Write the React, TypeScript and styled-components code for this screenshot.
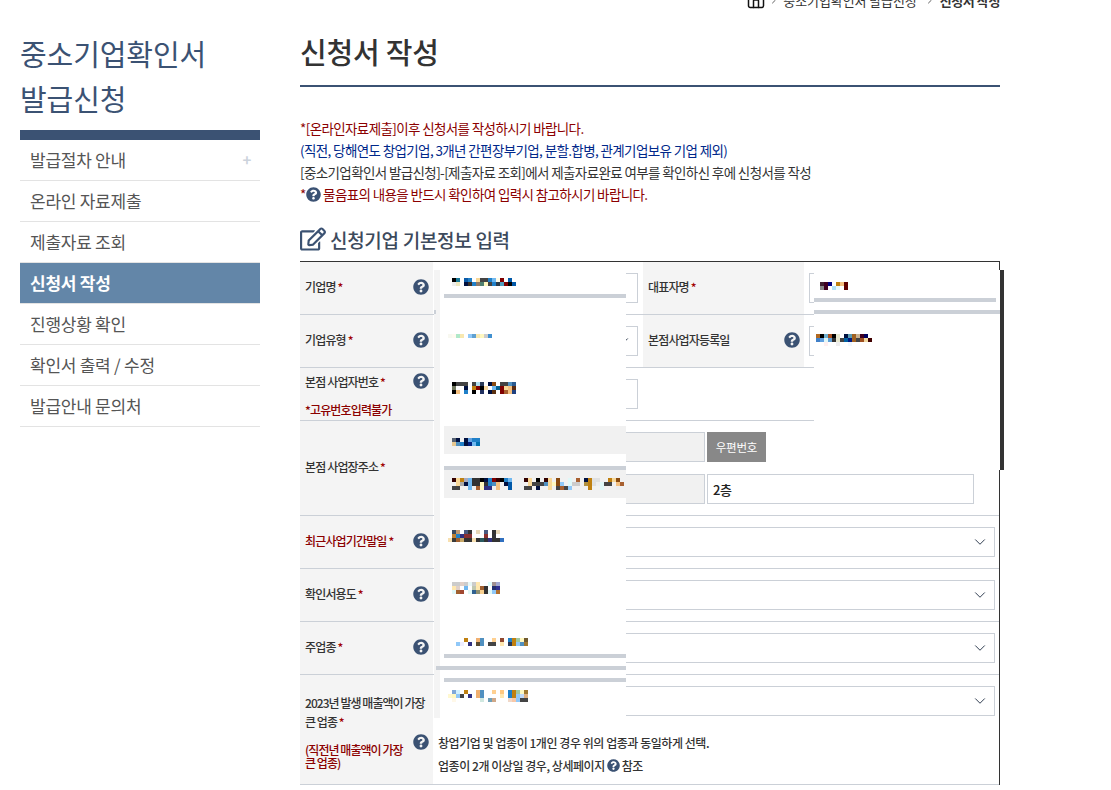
import React from "react";
import styled, { createGlobalStyle } from "styled-components";
import { ChevronDown, ChevronRight, House } from "lucide-react";
import { FaQuestionCircle, FaRegEdit } from "react-icons/fa";

const NAVY = "#3b5273";
const LINE = "#cbd0d7";
const DARK_RED = "#8b0000";

const GlobalStyle = createGlobalStyle`
  html, body {
    margin: 0;
    padding: 0;
    background: #fff;
    overflow: hidden;
    font-family: "Noto Sans CJK KR", "Noto Sans", sans-serif;
    color: #333;
  }
  * {
    box-sizing: border-box;
  }
`;

const Page = styled.div`
  display: flex;
  height: 790px;
  padding-left: 20px;
  overflow: hidden;
`;

const Sidebar = styled.aside`
  width: 240px;
  margin-right: 40px;
  padding-top: 31px;
  flex-shrink: 0;
`;

const SideTitle = styled.h1`
  margin: 0 0 9px;
  font-size: 29px;
  font-weight: 400;
  line-height: 45px;
  letter-spacing: -0.1px;
  color: ${NAVY};
`;

const SideMenu = styled.ul`
  margin: 0;
  padding: 0;
  list-style: none;
  border-top: 10px solid ${NAVY};
`;

const SideItem = styled.li<{ $active?: boolean }>`
  display: flex;
  align-items: center;
  justify-content: space-between;
  height: 41px;
  padding: 0 9px 2px 10px;
  border-bottom: 1px solid #e3e3e3;
  background-clip: padding-box;
  background-color: ${(p) => (p.$active ? "#6386a8" : "transparent")};
  color: ${(p) => (p.$active ? "#fff" : "#555")};
  font-size: 17px;
  font-weight: ${(p) => (p.$active ? 700 : 400)};
  letter-spacing: -0.25px;
`;

const PlusMark = styled.span`
  color: #ccd3dc;
  font-size: 15px;
  font-weight: 700;
`;

const Main = styled.main`
  width: 700px;
  flex-shrink: 0;
`;

const Breadcrumb = styled.nav`
  display: flex;
  align-items: center;
  justify-content: flex-end;
  height: 18px;
  margin-top: -9px;
  font-size: 13px;
  letter-spacing: -0.1px;
  color: #333;
`;

const HomeIcon = styled(House)`
  margin-right: 2px;
`;

const Crumb = styled.span<{ $current?: boolean }>`
  display: flex;
  align-items: center;
  margin-left: ${(p) => (p.$current ? "7px" : "3px")};
  font-weight: ${(p) => (p.$current ? 700 : 400)};
  letter-spacing: ${(p) => (p.$current ? "-0.4px" : "-0.1px")};
`;

const CrumbArrow = styled(ChevronRight)`
  margin-right: 4px;
`;

const PageTitle = styled.h2`
  margin: 20px 0 0;
  height: 58px;
  padding-top: 1px;
  border-bottom: 2px solid ${NAVY};
  font-size: 29px;
  font-weight: 500;
  line-height: 42px;
  letter-spacing: -0.2px;
  color: #333;
`;

const Notice = styled.div`
  margin-top: 30px;
  font-size: 13.5px;
  line-height: 22px;
  letter-spacing: -0.62px;
`;

const NoticeLine = styled.p<{ $color?: string }>`
  display: flex;
  align-items: center;
  margin: 0;
  height: 22px;
  color: ${(p) => p.$color || "#333"};
`;

const SectionTitle = styled.h3`
  display: flex;
  align-items: center;
  gap: 4px;
  margin: 19px 0 7px;
  height: 30px;
  font-size: 19px;
  font-weight: 500;
  letter-spacing: -0.3px;
  color: #3d4a5c;
`;

const FormTable = styled.div`
  position: relative;
  border-top: 1px solid #333;
  border-right: 1px solid #333;
`;

const Row = styled.div<{ $height: number }>`
  display: flex;
  height: ${(p) => p.$height}px;
  border-bottom: 1px solid ${LINE};
`;

const Th = styled.div<{ $width?: number; $pt?: number }>`
  position: relative;
  display: flex;
  align-items: ${(p) => (p.$pt ? "flex-start" : "center")};
  justify-content: space-between;
  width: ${(p) => p.$width || 133}px;
  flex-shrink: 0;
  padding: ${(p) => (p.$pt ? `${p.$pt}px 4px 0 5px` : "0 4px 2px 5px")};
  background: #f4f4f4;
  font-size: 12px;
  font-weight: 500;
  letter-spacing: -0.85px;
  color: ${(p) => p.color || "#333"};
`;

const ThText = styled.div`
  flex: 1;
  line-height: 18px;
`;

const WideLabel = styled.div`
  flex: 1;
  line-height: 19px;
  letter-spacing: -0.95px;
`;

const ThWarn = styled.div<{ $mt: number; $tight?: boolean }>`
  margin-top: ${(p) => p.$mt}px;
  color: ${DARK_RED};
  line-height: ${(p) => (p.$tight ? "13px" : "18px")};
`;

const Star = styled.span`
  color: #a00000;
`;

const HelpIcon = styled(FaQuestionCircle)`
  flex-shrink: 0;
  color: ${NAVY};
`;

const FloatingHelp = styled(HelpIcon)`
  position: absolute;
  right: 4px;
  top: 59px;
`;

const Td = styled.div<{ $width?: number }>`
  display: flex;
  flex-direction: column;
  ${(p) => (p.$width ? `width: ${p.$width}px;` : "flex: 1;")}
  padding: 11px 4px 0 5px;
  min-width: 0;
`;

const NarrowTd = styled(Td)`
  padding-right: 5px;
`;

const Field = styled.div<{ $width?: number; $gray?: boolean }>`
  display: flex;
  align-items: center;
  height: 30px;
  padding: 0 5px;
  ${(p) => (p.$width ? `width: ${p.$width}px;` : "")}
  border: 1px solid ${LINE};
  background: ${(p) => (p.$gray ? "#f1f1f1" : "#fff")};
  font-size: 13px;
  font-weight: 500;
  letter-spacing: -0.4px;
  color: #222;
`;

const SelectField = styled(Field)`
  justify-content: flex-end;
  padding-right: 5px;
  color: #333;
`;

const AddressRow = styled.div`
  display: flex;
  gap: 2px;
  margin-bottom: 12px;
`;

const ZipButton = styled.button`
  width: 59px;
  height: 30px;
  padding: 0;
  border: 0;
  background: #888;
  color: #fff;
  font-family: inherit;
  font-size: 11.5px;
  letter-spacing: -0.2px;
`;

const Guide = styled.div`
  padding-top: 15px;
  font-size: 12px;
  font-weight: 500;
  line-height: 23px;
  letter-spacing: -0.45px;
  color: #333;
`;

const GuideLine = styled.div`
  display: flex;
  align-items: center;
  gap: 2px;
`;

const LeftCover = styled.div`
  position: absolute;
  left: 134px;
  top: 8px;
  display: flex;
  flex-direction: column;
  width: 192px;
  height: 448px;
  padding-left: 6px;
  overflow: hidden;
  background: linear-gradient(to right, #f4f4f4 6px, #fff 6px);
`;

const RightCover = styled.div`
  position: absolute;
  left: 514px;
  top: 8px;
  display: flex;
  flex-direction: column;
  width: 190px;
  height: 200px;
  background: #fff;
  border-right: 4px solid #333;
`;

const CoverBar = styled.div<{ $mt: number; $ml?: number; $mr?: number }>`
  height: 4px;
  flex-shrink: 0;
  margin: ${(p) => p.$mt}px ${(p) => p.$mr || 0}px 0 ${(p) => p.$ml ?? 4}px;
  background: ${LINE};
`;

const CoverField = styled.div<{ $mt: number; $pt: number }>`
  height: 28px;
  flex-shrink: 0;
  margin: ${(p) => p.$mt}px 0 0 4px;
  padding-top: ${(p) => p.$pt}px;
  overflow: hidden;
  background: #f1f1f1;
`;

const CoverTick = styled.span`
  position: absolute;
  left: 0;
  top: 40px;
  width: 2px;
  height: 4px;
  background: ${LINE};
`;

const PixelSvg = styled.svg<{ $mt: number; $ml: number }>`
  display: block;
  flex-shrink: 0;
  margin: ${(p) => p.$mt}px 0 0 ${(p) => p.$ml}px;
`;

const PALETTE: Record<string, string> = {
  k: "#000",
  K: "#333",
  d: "#444",
  g: "#ccc",
  e: "#eee",
  t: "#1a7a9a",
  b: "#0a5aa8",
  B: "#2080c8",
  s: "#70b8f0",
  S: "#90c8f8",
  c: "#f8d898",
  y: "#fff8c0",
  m: "#800000",
  M: "#8a3030",
  n: "#001040",
  N: "#0058a8",
  o: "#c08010",
  O: "#f4c080",
  r: "#8a4a10",
  R: "#a86030",
  v: "#303080",
  w: "#e0f8f8",
  h: "#5090c0",
  x: "#e0e0e0",
};

type PixelsProps = { rows: string[]; mt?: number; ml?: number };

// each row is a list of colour tokens, "." leaves the block empty
const Pixels: React.FC<PixelsProps> = ({ rows, mt = 0, ml = 0 }) => {
  const cells = rows.map((row) => row.split(" "));
  const cols = Math.max(...cells.map((row) => row.length));
  return (
    <PixelSvg
      $mt={mt}
      $ml={ml}
      width={cols * 4}
      height={rows.length * 4}
      shapeRendering="crispEdges"
    >
      {cells.map((row, y) =>
        row.map((token, x) =>
          token === "." ? null : (
            <rect
              key={`${x}-${y}`}
              x={x * 4}
              y={y * 4}
              width={4}
              height={4}
              fill={PALETTE[token] || `#${token}`}
            />
          )
        )
      )}
    </PixelSvg>
  );
};

const BLUR_NAME = [
  "k t . b B . c d d B s fffbe8 m . N",
  "e efe8c0 . n 3a3028 B 8a7868 508070 y d B 2a3a48 50a0c0 m k N",
];
const BLUR_TYPE = ["f8f8f0 fffaf0 b0e8c8 f8e8b0 . S 60a0d0 f8e8b0 y g 4090d0"];
const BLUR_NUMBER = [
  "k d d d . d b0e0f0 2a3a58 . n r . d d h 2a5a90",
  "707860 . . n . o m k f8d8a0 . s 006090 m c O 5a2a10",
  "k O . B . k . 203060 . n 5a3010 . m R O 204080",
];
const BLUR_ZIP = ["556070 n . n 60a0e0 B B", "e8c890 h B n 002080 s 0070b0"];
const BLUR_ADDRESS = [
  "300 c o aab s K K k n B m 300 k B s . . . 300 c . k . 300 c . r . . w . R . n o x x . . o c r",
  ". c aaa n s K K y K B h O . n N . . . . c d d d h c y r S . w g g . b09040 o x e w d d . O R",
  "d d . . s . R y v v . O . . N . . . d d . n . . c . d R d S . . . . o . . w . . . e .",
];
const BLUR_DATE = [
  ". 3a4a60 c09870 . 4a5a80 K . e8d8b8 . 4a5a80 . K e8d8b8",
  ". c08030 B v M M . . . M . K",
  "f8e0b0 3a3a3a a06030 c8a868 K K f8e0b0 K 2a5a60 K v K K 3070c0",
];
const BLUR_USE = [
  "g g e0d0c8 g e8f8f8 g ffe8b0 . . e0ffff a09090 a0a8d0",
  "ffe8b0 e0d0c8 . s . c0c8b0 ffe8b0 a06030 K . 203070 303090",
  "w a06030 a04830 . w 306090 909070 f8d090 K w S b07030",
];
const BLUR_MAIN = [
  ". . . o . . f0b070 h . . ffd090 . 904830 . B o a0c8a0 y 705a30",
  ". S eef . v . 5a4a30 h . d d . ffe8b0 . 2a3a58 o S h a07830",
];
const BLUR_TOP = [
  ". 80a8d8 d0f0ff . o . . f0b070 h . . ffd090 . ffc880 . B o a0c8a0 y a07830",
  "fff8d0 y S d . v . f0b070 h . . . . ffe8b0 . B o S c0d8f8 e0b080",
  ". fff8e8 . . . . . . d0e8e0 . 70a0b8 d0a888 . . . f0d8c8 f8c8a8 S d d",
];
const BLUR_CEO = ["402030 400020 000080 . o O 600000", "888 400020 . b0e0f8 e8f8ff . 600000"];
const BLUR_OPEN = [
  "b06820 k 70b0d0 a85020 k e8e8d0 . n 5a9ab0 a06020 c8b090 400020 000060",
  "4080c8 60a0e0 w 60a0d8 K e8e8d0 d 0060a0 001880 a06020 d a05020 f0d8a0 400000",
  ". . fff0f0 . . e . . f0f8ff",
];

const SIDE_ITEMS = [
  "발급절차 안내",
  "온라인 자료제출",
  "제출자료 조회",
  "신청서 작성",
  "진행상황 확인",
  "확인서 출력 / 수정",
  "발급안내 문의처",
];

const SelectBox = () => (
  <SelectField>
    <ChevronDown size={18} strokeWidth={1.3} color="#2c3a4d" />
  </SelectField>
);

type LabelProps = { text: string; color?: string; width?: number; help?: boolean; star?: boolean };

const LabelRow: React.FC<LabelProps> = ({ text, color, width, help = true, star = true }) => (
  <Th $width={width} color={color}>
    <ThText>
      {text} {star && <Star>*</Star>}
    </ThText>
    {help && <HelpIcon size={16} />}
  </Th>
);

const App = () => {
  return (
    <>
      <GlobalStyle />
      <Page>
        <Sidebar>
          <SideTitle>
            중소기업확인서
            <br />
            발급신청
          </SideTitle>
          <SideMenu>
            {SIDE_ITEMS.map((item, index) => (
              <SideItem key={item} $active={index === 3}>
                {item}
                {index === 0 && <PlusMark>+</PlusMark>}
              </SideItem>
            ))}
          </SideMenu>
        </Sidebar>
        <Main>
          <Breadcrumb>
            <HomeIcon size={20} strokeWidth={1.8} color="#111" />
            <ChevronRight size={12} strokeWidth={1.6} />
            <Crumb>중소기업확인서 발급신청</Crumb>
            <Crumb $current>
              <CrumbArrow size={12} strokeWidth={1.6} />
              신청서 작성
            </Crumb>
          </Breadcrumb>
          <PageTitle>신청서 작성</PageTitle>
          <Notice>
            <NoticeLine $color={DARK_RED}>*[온라인자료제출]이후 신청서를 작성하시기 바랍니다.</NoticeLine>
            <NoticeLine $color="#00288a">
              (직전, 당해연도 창업기업, 3개년 간편장부기업, 분할.합병, 관계기업보유 기업 제외)
            </NoticeLine>
            <NoticeLine>
              [중소기업확인서 발급신청]-[제출자료 조회]에서 제출자료완료 여부를 확인하신 후에 신청서를 작성
            </NoticeLine>
            <NoticeLine $color={DARK_RED}>
              *<HelpIcon size={15} />
              &nbsp;물음표의 내용을 반드시 확인하여 입력시 참고하시기 바랍니다.
            </NoticeLine>
          </Notice>
          <SectionTitle>
            <FaRegEdit size={26} color={NAVY} />
            신청기업 기본정보 입력
          </SectionTitle>
          <FormTable>
            <Row $height={53}>
              <LabelRow text="기업명" />
              <NarrowTd $width={210}>
                <Field />
              </NarrowTd>
              <LabelRow text="대표자명" width={161} help={false} />
              <Td>
                <Field />
              </Td>
            </Row>
            <Row $height={53}>
              <LabelRow text="기업유형" />
              <NarrowTd $width={210}>
                <SelectBox />
              </NarrowTd>
              <LabelRow text="본점사업자등록일" width={161} star={false} />
              <Td>
                <Field />
              </Td>
            </Row>
            <Row $height={53}>
              <Th $pt={5}>
                <ThText>
                  본점 사업자번호 <Star>*</Star>
                  <ThWarn $mt={10}>*고유번호입력불가</ThWarn>
                </ThText>
                <HelpIcon size={16} />
              </Th>
              <NarrowTd $width={210}>
                <Field />
              </NarrowTd>
            </Row>
            <Row $height={95}>
              <LabelRow text="본점 사업장주소" help={false} />
              <Td>
                <AddressRow>
                  <Field $gray $width={267} />
                  <ZipButton>우편번호</ZipButton>
                </AddressRow>
                <AddressRow>
                  <Field $gray $width={267} />
                  <Field $width={267}>2층</Field>
                </AddressRow>
              </Td>
            </Row>
            <Row $height={53}>
              <LabelRow text="최근사업기간말일" color={DARK_RED} />
              <Td>
                <SelectBox />
              </Td>
            </Row>
            <Row $height={53}>
              <LabelRow text="확인서용도" />
              <Td>
                <SelectBox />
              </Td>
            </Row>
            <Row $height={53}>
              <LabelRow text="주업종" />
              <Td>
                <SelectBox />
              </Td>
            </Row>
            <Row $height={110}>
              <Th $pt={18}>
                <WideLabel>
                  2023년 발생 매출액이 가장
                  <br />큰 업종 <Star>*</Star>
                  <ThWarn $mt={12} $tight>
                    (직전년 매출액이 가장
                    <br />큰 업종)
                  </ThWarn>
                </WideLabel>
                <FloatingHelp size={16} />
              </Th>
              <Td>
                <SelectBox />
                <Guide>
                  <GuideLine>창업기업 및 업종이 1개인 경우 위의 업종과 동일하게 선택.</GuideLine>
                  <GuideLine>
                    업종이 2개 이상일 경우, 상세페이지
                    <HelpIcon size={13} />
                    참조
                  </GuideLine>
                </Guide>
              </Td>
            </Row>
            <LeftCover>
              <CoverTick />
              <Pixels rows={BLUR_NAME} mt={8} ml={12} />
              <CoverBar $mt={8} />
              <Pixels rows={BLUR_TYPE} mt={36} ml={8} />
              <Pixels rows={BLUR_NUMBER} mt={44} ml={12} />
              <CoverField $mt={32} $pt={12}>
                <Pixels rows={BLUR_ZIP} ml={8} />
              </CoverField>
              <CoverBar $mt={12} />
              <CoverField $mt={0} $pt={8}>
                <Pixels rows={BLUR_ADDRESS} ml={8} />
              </CoverField>
              <Pixels rows={BLUR_DATE} mt={32} ml={8} />
              <Pixels rows={BLUR_USE} mt={40} ml={12} />
              <Pixels rows={BLUR_MAIN} mt={44} ml={12} />
              <CoverBar $mt={8} />
              <CoverBar $mt={8} $ml={-4} />
              <CoverBar $mt={8} />
              <Pixels rows={BLUR_TOP} mt={8} ml={8} />
            </LeftCover>
            <RightCover>
              <Pixels rows={BLUR_CEO} mt={12} ml={6} />
              <CoverBar $mt={8} $ml={0} $mr={4} />
              <CoverBar $mt={8} $ml={0} />
              <Pixels rows={BLUR_OPEN} mt={20} ml={2} />
            </RightCover>
          </FormTable>
        </Main>
      </Page>
    </>
  );
};

export default App;
